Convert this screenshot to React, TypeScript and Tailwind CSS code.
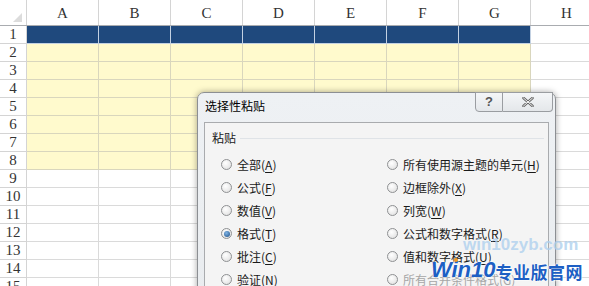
import React from "react";

const cols = ["A", "B", "C", "D", "E", "F", "G"];
const rows = Array.from({ length: 15 }, (_, i) => i + 1);

function Radio({ checked }: { checked?: boolean }) {
  return (
    <span className="relative flex h-[11px] w-[11px] shrink-0 items-center justify-center rounded-full border border-[#8f9193] bg-[radial-gradient(circle_at_40%_35%,#ffffff,#dcdcdc)]">
      {checked && (
        <span className="h-[6px] w-[6px] rounded-full bg-[radial-gradient(circle_at_40%_35%,#7fb4e6,#1d4f86)]" />
      )}
    </span>
  );
}

function Item({ label, k, checked, disabled }: { label: string; k: string; checked?: boolean; disabled?: boolean }) {
  return (
    <div className={`flex h-[23px] items-center gap-[5px] whitespace-nowrap ${disabled ? "text-[#a6a6a6]" : "text-[#1a1a1a]"}`}>
      <Radio checked={checked} />
      <span>
        {label}(<span className="underline underline-offset-2">{k}</span>)
      </span>
    </div>
  );
}

export default function App() {
  const serif = { fontFamily: '"Liberation Serif", "DejaVu Serif", serif' };
  return (
    <div className="relative h-[286px] w-[589px] overflow-hidden bg-white">
      {/* header row */}
      <div className="flex h-[26px] border-b border-[#a9acb0] text-[15px] leading-none text-[#333]" style={serif}>
        <div className="relative w-[27px] shrink-0 border-r border-[#d4d4d4]">
          <div className="absolute bottom-[3px] right-[4px] h-0 w-0 border-b-[9px] border-l-[9px] border-b-[#dcdcdc] border-l-transparent" />
        </div>
        {[...cols, "H"].map((c) => (
          <div key={c} className="flex w-[72px] shrink-0 items-end justify-center border-r border-[#d4d4d4] pb-[4px]">
            {c}
          </div>
        ))}
      </div>
      {rows.map((r) => {
        const blue = r === 1;
        const yellow = r >= 2 && r <= 8;
        return (
          <div key={r} className="flex h-[18px]">
            <div
              className="flex w-[27px] shrink-0 items-center justify-center border-b border-r border-[#d4d4d4] text-[15px] leading-none text-[#333]"
              style={serif}
            >
              {r}
            </div>
            {cols.map((c) => (
              <div
                key={c}
                className={`w-[72px] shrink-0 border-b border-r ${
                  blue
                    ? "border-[#c3d1e2] bg-[#1f497d]"
                    : yellow
                    ? "border-[#d9d6bd] bg-[#fffacd]"
                    : "border-[#dadada] bg-white"
                }`}
              />
            ))}
            <div className="w-[72px] shrink-0 border-b border-r border-[#dadada]" />
          </div>
        );
      })}

      {/* dialog */}
      <div
        className="absolute left-[197px] top-[92px] h-[210px] w-[359px] rounded-t-[7px] border border-[#8c8f93] bg-[linear-gradient(#eef1f4,#e9ecef)] shadow-[0_0_6px_rgba(0,0,0,0.35)]"
        style={{ fontFamily: '"Noto Sans CJK SC", sans-serif', fontSize: 12 }}
      >
        <div className="absolute left-[7px] top-[4px] text-[12px] leading-[18px] text-black">选择性粘贴</div>
        <div className="absolute right-[2px] top-[-1px] flex h-[20px]">
          <div className="flex w-[28px] items-center justify-center rounded-bl-[4px] border border-[#9a9da1] bg-[linear-gradient(#f4f6f8,#e4e7ea)] text-[13px] font-bold text-[#555]" style={{ fontFamily: '"Liberation Sans", sans-serif' }}>
            ?
          </div>
          <div className="flex w-[50px] items-center justify-center rounded-br-[4px] border border-l-0 border-[#9a9da1] bg-[linear-gradient(#f4f6f8,#e4e7ea)]">
            <svg width="12" height="10" viewBox="0 0 12 10">
              <path d="M1.5 1 L10.5 9 M10.5 1 L1.5 9" stroke="#666" strokeWidth="2.6" strokeLinecap="round" />
              <path d="M1.5 1 L10.5 9 M10.5 1 L1.5 9" stroke="#f4f4f4" strokeWidth="1" strokeLinecap="round" />
            </svg>
          </div>
        </div>
        <div className="absolute left-[6px] right-[6px] top-[29px] h-[200px] border border-[#a9abae] bg-[#f4f4f4]">
          <div className="flex items-center pl-[7px] pr-[4px] pt-[6px]">
            <span className="text-[#1a1a1a]">粘贴</span>
            <div className="ml-[4px] h-px flex-1 bg-[#dfe3e7]" />
          </div>
          <div className="grid grid-cols-[166px_1fr] pl-[16px] pt-[6px]">
            <Item label="全部" k="A" />
            <Item label="所有使用源主题的单元" k="H" />
            <Item label="公式" k="F" />
            <Item label="边框除外" k="X" />
            <Item label="数值" k="V" />
            <Item label="列宽" k="W" />
            <Item label="格式" k="T" checked />
            <Item label="公式和数字格式" k="R" />
            <Item label="批注" k="C" />
            <Item label="值和数字格式" k="U" />
            <Item label="验证" k="N" />
            <Item label="所有合并条件格式" k="G" disabled />
          </div>
        </div>
      </div>

      {/* watermark */}
      <div
        className="absolute left-[463px] top-[235px] whitespace-nowrap text-[17px] font-bold leading-[20px] text-[#aed0ee]/80"
        style={{ fontFamily: '"Liberation Sans", sans-serif' }}
      >
        win10zyb.com
      </div>
      <div className="absolute right-[6px] top-[259px] flex items-end whitespace-nowrap font-bold leading-none text-[#1d5fc4] [text-shadow:0_0_2px_#fff,0_0_2px_#fff,0_0_1px_#fff]">
        <span className="text-[22px] italic" style={{ fontFamily: '"Liberation Sans", sans-serif' }}>
          W<span className="relative">i<span className="absolute left-[3px] top-[1px] h-[4px] w-[4px] rounded-full bg-[#f39a1e]" /></span>n10
        </span>
        <span className="pb-[1px] text-[17px] tracking-[0.5px]" style={{ fontFamily: '"Noto Sans CJK SC", sans-serif' }}>
          专业版官网
        </span>
      </div>
    </div>
  );
}
